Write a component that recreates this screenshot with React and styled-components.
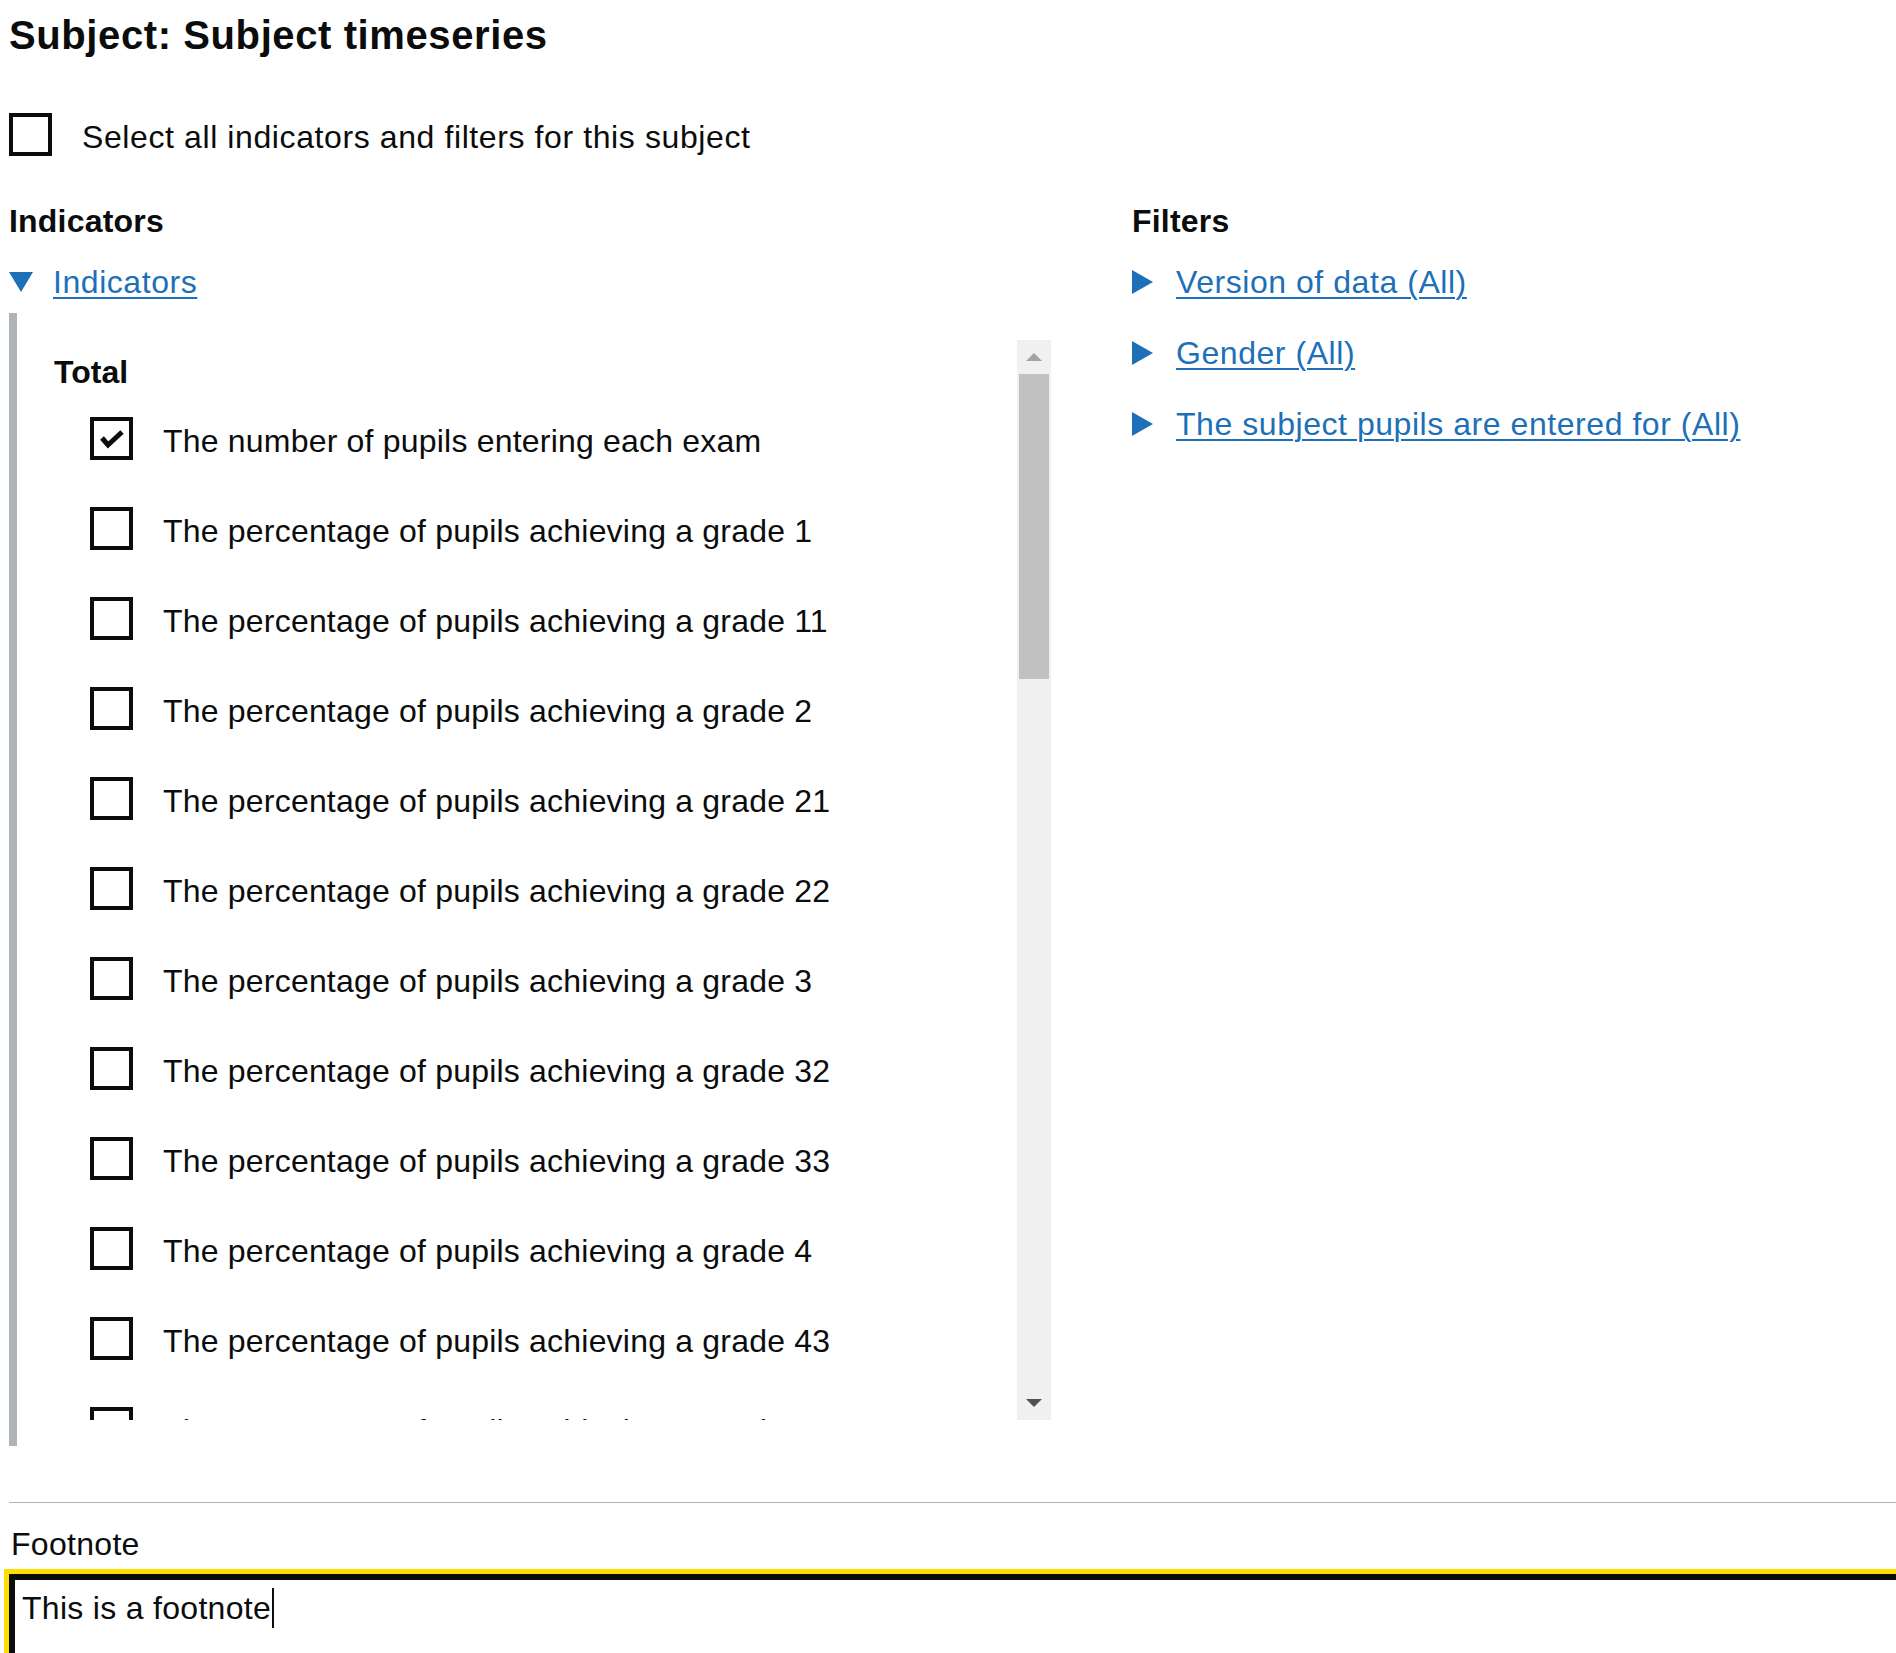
import React from 'react'
import styled, { createGlobalStyle } from 'styled-components'

const GlobalStyle = createGlobalStyle`
  html, body {
    margin: 0;
    padding: 0;
    overflow: hidden;
    background: #fff;
  }
  body {
    font-family: "Liberation Sans", Arial, sans-serif;
    color: #0b0c0c;
  }
`

const Page = styled.main`
  width: 2260px;
  padding: 13px 0 0 9px;
`
const Title = styled.h1`
  margin: 0;
  font-size: 40px;
  line-height: 44px;
  font-weight: 700;
  letter-spacing: 0.6px;
`
const CheckRow = styled.label`
  display: flex;
  align-items: flex-start;
  gap: 30px;
  margin-top: ${p => p.$top || 0}px;
  margin-bottom: ${p => p.$bottom || 0}px;
  height: 43px;
`
const Box = styled.span`
  box-sizing: border-box;
  flex: 0 0 43px;
  width: 43px;
  height: 43px;
  border: 4px solid #0b0c0c;
  display: flex;
  align-items: center;
  justify-content: center;
  background: #fff;
`
const CheckText = styled.span`
  margin-top: 4px;
  font-size: 32px;
  line-height: 40px;
  letter-spacing: ${p => p.$wide ? 0.6 : 0.2}px;
  white-space: nowrap;
`
const Columns = styled.div`
  display: grid;
  grid-template-columns: 1123px 1fr;
  margin-top: 45px;
`
const Column = styled.section`
  display: flex;
  flex-direction: column;
`
const SubHeading = styled.h2`
  margin: 0;
  font-size: 32px;
  line-height: 40px;
  font-weight: 700;
  letter-spacing: 0.2px;
`
const Summary = styled.a.attrs({ href: '#' })`
  display: flex;
  align-items: center;
  margin-top: ${p => p.$top}px;
  font-size: 32px;
  line-height: 40px;
  color: #1d70b8;
  text-decoration: none;
  white-space: nowrap;
`
const Arrow = styled.span`
  flex: 0 0 44px;
  display: flex;
  align-items: center;
  height: 40px;
`
const LinkText = styled.span`
  letter-spacing: 0.55px;
  text-decoration: underline;
  text-decoration-thickness: 2px;
  text-underline-offset: 4px;
`
const DetailsText = styled.div`
  width: 1042px;
  box-sizing: border-box;
  margin-top: 11px;
  border-left: 8px solid #b1b4b6;
  padding: 27px 0 26px 0;
`
const ScrollBox = styled.div`
  display: flex;
  height: 1080px;
`
const Viewport = styled.div`
  flex: 1;
  overflow: hidden;
  padding: 12px 0 0 37px;
`
const GroupTitle = styled.h3`
  margin: 0 0 25px;
  font-size: 32px;
  line-height: 40px;
  font-weight: 700;
`
const Items = styled.div`
  padding-left: 36px;
`
const Scrollbar = styled.div`
  flex: 0 0 34px;
  background: #f0f0f0;
  display: flex;
  flex-direction: column;
`
const ScrollButton = styled.div`
  height: 34px;
  display: flex;
  align-items: center;
  justify-content: center;
`
const Caret = styled.span`
  width: 0;
  height: 0;
  border-left: 8px solid transparent;
  border-right: 8px solid transparent;
  ${p => p.$up
    ? 'border-bottom: 8px solid #a3a3a3;'
    : 'border-top: 8px solid #505050;'}
`
const Track = styled.div`
  flex: 1;
  padding: 0 2px;
`
const Thumb = styled.div`
  height: 305px;
  background: #c1c1c1;
`
const Rule = styled.hr`
  margin: 56px 0 0;
  border: 0;
  border-top: 1px solid #b1b4b6;
`
const FieldLabel = styled.label`
  display: block;
  margin: 21px 0 10px 2px;
  font-size: 32px;
  line-height: 40px;
  letter-spacing: 0.3px;
`
const Field = styled.div`
  display: flex;
  box-sizing: border-box;
  width: 2240px;
  height: 260px;
  padding: 8px 7px;
  border: 6px solid #0b0c0c;
  outline: 5px solid #ffdd00;
  background: #fff;
`
const FieldText = styled.span`
  font-size: 32px;
  line-height: 40px;
  letter-spacing: 0.3px;
  height: 40px;
  border-right: 2px solid #0b0c0c;
  padding-right: 1px;
`

const Tick = () => (
  <svg width="26" height="20" viewBox="0 0 26 20">
    <polyline points="3,9 9,16 23,3" fill="none" stroke="#0b0c0c" strokeWidth="5" />
  </svg>
)

const Triangle = ({ down }) => (
  down
    ? <svg width="24" height="20" viewBox="0 0 24 20"><polygon points="0,0 24,0 12,20" fill="#1d70b8" /></svg>
    : <svg width="21" height="24" viewBox="0 0 21 24"><polygon points="0,0 21,12 0,24" fill="#1d70b8" /></svg>
)

const grades = ['1', '11', '2', '21', '22', '3', '32', '33', '4', '43', '44']
const indicators = [
  'The number of pupils entering each exam',
  ...grades.map(g => `The percentage of pupils achieving a grade ${g}`),
]
const filters = ['Version of data (All)', 'Gender (All)', 'The subject pupils are entered for (All)']

export default function App() {
  return (
    <Page>
      <GlobalStyle />
      <Title>Subject: Subject timeseries</Title>

      <CheckRow $top={56}>
        <Box />
        <CheckText $wide>Select all indicators and filters for this subject</CheckText>
      </CheckRow>

      <Columns>
        <Column>
          <SubHeading>Indicators</SubHeading>
          <Summary $top={21}>
            <Arrow><Triangle down /></Arrow>
            <LinkText>Indicators</LinkText>
          </Summary>
          <DetailsText>
            <ScrollBox>
              <Viewport>
                <GroupTitle>Total</GroupTitle>
                <Items>
                  {indicators.map((label, i) => (
                    <CheckRow key={label} $bottom={47}>
                      <Box>{i === 0 && <Tick />}</Box>
                      <CheckText>{label}</CheckText>
                    </CheckRow>
                  ))}
                </Items>
              </Viewport>
              <Scrollbar>
                <ScrollButton><Caret $up /></ScrollButton>
                <Track><Thumb /></Track>
                <ScrollButton><Caret /></ScrollButton>
              </Scrollbar>
            </ScrollBox>
          </DetailsText>
        </Column>

        <Column>
          <SubHeading>Filters</SubHeading>
          {filters.map((f, i) => (
            <Summary key={f} $top={i === 0 ? 21 : 31}>
              <Arrow><Triangle /></Arrow>
              <LinkText>{f}</LinkText>
            </Summary>
          ))}
        </Column>
      </Columns>

      <Rule />
      <FieldLabel>Footnote</FieldLabel>
      <Field>
        <FieldText>This is a footnote</FieldText>
      </Field>
    </Page>
  )
}
